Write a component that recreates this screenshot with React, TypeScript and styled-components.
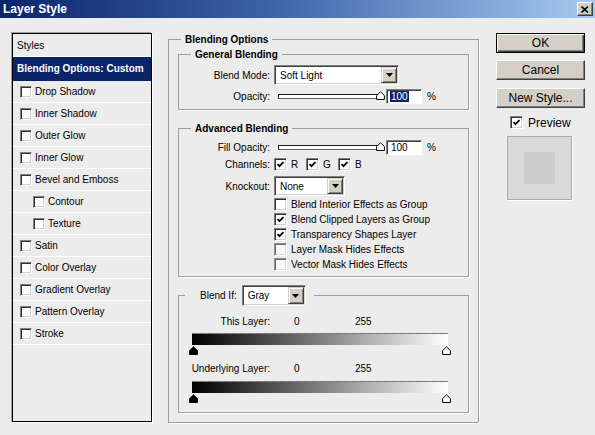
import React from 'react';
import styled, { createGlobalStyle } from 'styled-components';

const GlobalStyle = createGlobalStyle`
  html, body { margin: 0; padding: 0; background: #ececec; }
  body {
    font-family: "Liberation Sans", Arial, sans-serif;
    font-size: 10px;
    color: #000;
  }
  * { box-sizing: border-box; }
`;

const Window = styled.div`
  width: 595px;
  height: 435px;
  background: #ececec;
  display: flex;
  flex-direction: column;
  overflow: hidden;
`;

const TitleBar = styled.div`
  flex: none;
  height: 18px;
  display: flex;
  align-items: center;
  justify-content: space-between;
  padding: 0 2px 0 3px;
  background: linear-gradient(to right, #0a246a 0%, #3d62a8 45%, #a6caf0 100%);
`;

const Title = styled.span`
  color: #fff;
  font-weight: bold;
  font-size: 12px;
  line-height: 18px;
`;

const CloseButton = styled.span`
  width: 16px;
  height: 14px;
  display: flex;
  align-items: center;
  justify-content: center;
  background: #d4d0c8;
  border: 1px solid;
  border-color: #fff #404040 #404040 #fff;
  box-shadow: inset -1px -1px 0 #808080;
`;

const Body = styled.div`
  display: flex;
  align-items: flex-start;
  padding: 15px 0 0 12px;
`;

/* ---------- left style list ---------- */

const StyleList = styled.div`
  flex: none;
  width: 140px;
  height: 389px;
  display: flex;
  flex-direction: column;
  border: 1px solid #000;
  box-shadow: -1px -1px 0 #a0a0a0, 1px 1px 0 #fff;
  background: #ececec;
`;

const StyleRow = styled.div<{ $h: number; $indent: number; $selected?: boolean }>`
  flex: none;
  height: ${(p) => p.$h}px;
  display: flex;
  align-items: center;
  gap: 3px;
  padding-left: ${(p) => p.$indent}px;
  border-bottom: 1px solid ${(p) => (p.$selected ? '#0a246a' : '#fff')};
  background: ${(p) => (p.$selected ? '#0a246a' : 'transparent')};
  color: ${(p) => (p.$selected ? '#fff' : '#000')};
  font-weight: ${(p) => (p.$selected ? 'bold' : 'normal')};
  white-space: nowrap;
`;

/* ---------- classic checkbox ---------- */

const CheckBox = styled.span<{ $size: number; $dim?: boolean }>`
  flex: none;
  width: ${(p) => p.$size}px;
  height: ${(p) => p.$size}px;
  display: inline-flex;
  align-items: center;
  justify-content: center;
  background: ${(p) => (p.$dim ? '#f7f7f7' : '#fff')};
  border: 1px solid;
  border-color: ${(p) => (p.$dim ? '#8c8c8c #fff #fff #8c8c8c' : '#808080 #fff #fff #808080')};
  box-shadow: ${(p) =>
    p.$dim
      ? 'inset 1px 1px 0 #6a6a6a, inset -1px -1px 0 #dcdcdc'
      : 'inset 1px 1px 0 #303030, inset -1px -1px 0 #d4d0c8'};
`;

const Check = ({ checked, size = 13, dim }: { checked?: boolean; size?: number; dim?: boolean }) => (
  <CheckBox $size={size} $dim={dim}>
    {checked && (
      <svg width="7" height="7" viewBox="0 0 7 7">
        <polyline points="0.5,3 2.5,5.2 6.5,1" fill="none" stroke="#000" strokeWidth="1.8" />
      </svg>
    )}
  </CheckBox>
);

/* ---------- right options panel ---------- */

const Group = styled.fieldset<{ $w: number; $pt: number; $px: number; $pb: number; $mt?: number; $ml?: number }>`
  flex: none;
  width: ${(p) => p.$w}px;
  margin: ${(p) => p.$mt ?? 0}px 0 0 ${(p) => p.$ml ?? 0}px;
  min-width: 0;
  padding: ${(p) => p.$pt}px ${(p) => p.$px}px ${(p) => p.$pb}px;
  border: 1px solid #9d9d9d;
  box-shadow: 1px 1px 0 #fff;
`;

const Legend = styled.legend<{ $ml: number; $pl: number; $pr: number }>`
  margin-left: ${(p) => p.$ml}px;
  padding: 0 ${(p) => p.$pr}px 0 ${(p) => p.$pl}px;
  font-weight: bold;
  line-height: 13px;
  display: flex;
  align-items: center;
  gap: 5px;
`;

const LegendLabel = styled.span`
  font-weight: normal;
`;

const Row = styled.div<{ $h: number; $mt?: number }>`
  display: flex;
  align-items: center;
  height: ${(p) => p.$h}px;
  margin-top: ${(p) => p.$mt ?? 0}px;
  white-space: nowrap;
`;

const Label = styled.span`
  flex: none;
  width: 91px;
  text-align: right;
  margin-right: 4px;
`;

const Select = styled.div<{ $w: number; $h: number }>`
  flex: none;
  width: ${(p) => p.$w}px;
  height: ${(p) => p.$h}px;
  display: flex;
  align-items: center;
  justify-content: space-between;
  padding: 1px 1px 1px 4px;
  background: #fff;
  border: 1px solid;
  border-color: #808080 #fff #fff #808080;
  box-shadow: inset 1px 1px 0 #404040, inset -1px -1px 0 #d4d0c8;
  font-weight: normal;
`;

const SelectText = styled.span`
  padding-left: 1px;
`;

const ArrowButton = styled.span`
  flex: none;
  width: 16px;
  height: 100%;
  display: flex;
  align-items: center;
  justify-content: center;
  background: #d4d0c8;
  border: 1px solid;
  border-color: #d4d0c8 #404040 #404040 #d4d0c8;
  box-shadow: inset 1px 1px 0 #fff, inset -1px -1px 0 #808080;
`;

const Dropdown = ({ value, w, h = 20 }: { value: string; w: number; h?: number }) => (
  <Select $w={w} $h={h}>
    <SelectText>{value}</SelectText>
    <ArrowButton>
      <svg width="7" height="4" viewBox="0 0 7 4">
        <polygon points="0,0 7,0 3.5,4" fill="#000" />
      </svg>
    </ArrowButton>
  </Select>
);

const SliderWrap = styled.div`
  position: relative;
  flex: none;
  width: 107px;
  height: 12px;
  margin-left: 4px;
  display: flex;
  align-items: center;
`;

const Track = styled.div`
  width: 100px;
  height: 5px;
  background: #fff;
  border: 1px solid #1a1a1a;
  border-right-color: #808080;
  border-bottom-color: #606060;
`;

const ThumbSlot = styled.span`
  position: absolute;
  right: 0;
  top: 1px;
  display: flex;
`;

const Thumb = ({ dark }: { dark?: boolean }) => (
  <svg width="9" height="9" viewBox="0 0 9 9">
    <path
      d="M4.5 0.8 L8.4 4.6 V8.5 H0.6 V4.6 Z"
      fill={dark ? '#000' : '#fff'}
      stroke="#000"
      strokeWidth="1"
    />
  </svg>
);

const Slider = () => (
  <SliderWrap>
    <Track />
    <ThumbSlot>
      <Thumb />
    </ThumbSlot>
  </SliderWrap>
);

const NumberBox = styled.div`
  flex: none;
  width: 36px;
  height: 15px;
  margin-left: 1px;
  display: flex;
  align-items: center;
  padding-left: 3px;
  background: #fff;
  border: 1px solid;
  border-color: #808080 #fff #fff #808080;
  box-shadow: inset 1px 1px 0 #404040;
`;

const Highlight = styled.span<{ $on?: boolean }>`
  background: ${(p) => (p.$on ? '#0a246a' : 'transparent')};
  color: ${(p) => (p.$on ? '#fff' : '#000')};
  line-height: 11px;
  padding: 0 1px;
`;

const Percent = styled.span`
  margin-left: 5px;
`;

const ChannelItem = styled.span`
  display: flex;
  align-items: center;
  gap: 4px;
  width: 32px;
`;

const OptionList = styled.div`
  display: flex;
  flex-direction: column;
  margin: 1px 0 0 95px;
`;

const OptionRow = styled.div`
  height: 15px;
  display: flex;
  align-items: center;
  gap: 4px;
  white-space: nowrap;
`;

const ValueLabel = styled.span<{ $w: number }>`
  flex: none;
  width: ${(p) => p.$w}px;
`;

const GradientBar = styled.div<{ $mt: number }>`
  width: 256px;
  height: 12px;
  margin: ${(p) => p.$mt}px 0 0 13px;
  background: linear-gradient(to right, #000 0%, #fff 100%);
  box-shadow: inset 0 1px 0 #7a7a7a;
`;

const ThumbRow = styled.div`
  width: 262px;
  height: 8px;
  margin: 1px 0 0 10px;
  display: flex;
  justify-content: space-between;
  align-items: flex-start;
`;

/* ---------- right column ---------- */

const ButtonColumn = styled.div`
  flex: none;
  width: 89px;
  margin-left: 17px;
  display: flex;
  flex-direction: column;
`;

const Button = styled.div<{ $default?: boolean; $mt?: number }>`
  height: 20px;
  margin-top: ${(p) => p.$mt ?? 0}px;
  display: flex;
  align-items: center;
  justify-content: center;
  font-size: 12px;
  background: #d4d0c8;
  border: 1px solid;
  border-color: ${(p) => (p.$default ? '#000' : '#fff #404040 #404040 #fff')};
  box-shadow: ${(p) =>
    p.$default
      ? 'inset 1px 1px 0 #fff, inset -1px -1px 0 #404040, inset -2px -2px 0 #808080'
      : 'inset -1px -1px 0 #808080'};
`;

const PreviewRow = styled.div`
  margin-top: 8px;
  height: 13px;
  display: flex;
  align-items: center;
  gap: 5px;
  padding-left: 14px;
  font-size: 12px;
`;

const Swatch = styled.div`
  width: 65px;
  height: 64px;
  margin: 7px 0 0 11px;
  display: flex;
  align-items: center;
  justify-content: center;
  background: #d9d9d9;
  border: 1px solid #a9a9a9;
  box-shadow: 1px 1px 0 #fff;
`;

const SwatchInner = styled.div`
  width: 31px;
  height: 32px;
  background: #cdcdcd;
`;

const effects: { name: string; indent: number }[] = [
  { name: 'Drop Shadow', indent: 7 },
  { name: 'Inner Shadow', indent: 7 },
  { name: 'Outer Glow', indent: 7 },
  { name: 'Inner Glow', indent: 7 },
  { name: 'Bevel and Emboss', indent: 7 },
  { name: 'Contour', indent: 20 },
  { name: 'Texture', indent: 20 },
  { name: 'Satin', indent: 7 },
  { name: 'Color Overlay', indent: 7 },
  { name: 'Gradient Overlay', indent: 7 },
  { name: 'Pattern Overlay', indent: 7 },
  { name: 'Stroke', indent: 7 },
];

const advancedOptions: { label: string; checked: boolean; dim?: boolean }[] = [
  { label: 'Blend Interior Effects as Group', checked: false },
  { label: 'Blend Clipped Layers as Group', checked: true },
  { label: 'Transparency Shapes Layer', checked: true },
  { label: 'Layer Mask Hides Effects', checked: false, dim: true },
  { label: 'Vector Mask Hides Effects', checked: false, dim: true },
];

export default function App() {
  return (
    <>
      <GlobalStyle />
      <Window>
        <TitleBar>
          <Title>Layer Style</Title>
          <CloseButton>
            <svg width="8" height="7" viewBox="0 0 8 7">
              <path d="M0.5 0.5 L7 6.5 M7 0.5 L0.5 6.5" stroke="#000" strokeWidth="1.6" />
            </svg>
          </CloseButton>
        </TitleBar>

        <Body>
          <StyleList>
            <StyleRow $h={23} $indent={4}>Styles</StyleRow>
            <StyleRow $h={24} $indent={4} $selected>
              Blending Options: Custom
            </StyleRow>
            {effects.map((e) => (
              <StyleRow key={e.name} $h={22} $indent={e.indent}>
                <Check size={12} />
                {e.name}
              </StyleRow>
            ))}
          </StyleList>

          <Group $w={311} $pt={2} $px={9} $pb={9} $ml={16}>
            <Legend $ml={3} $pl={4} $pr={4}>Blending Options</Legend>

            <Group $w={291} $pt={4} $px={0} $pb={5}>
              <Legend $ml={12} $pl={4} $pr={4}>General Blending</Legend>
              <Row $h={20}>
                <Label>Blend Mode:</Label>
                <Dropdown value="Soft Light" w={125} />
              </Row>
              <Row $h={16} $mt={3}>
                <Label>Opacity:</Label>
                <Slider />
                <NumberBox>
                  <Highlight $on>100</Highlight>
                </NumberBox>
                <Percent>%</Percent>
              </Row>
            </Group>

            <Group $w={291} $pt={4} $px={0} $pb={4} $mt={12}>
              <Legend $ml={12} $pl={4} $pr={4}>Advanced Blending</Legend>
              <Row $h={16}>
                <Label>Fill Opacity:</Label>
                <Slider />
                <NumberBox>
                  <Highlight>100</Highlight>
                </NumberBox>
                <Percent>%</Percent>
              </Row>
              <Row $h={13} $mt={3}>
                <Label>Channels:</Label>
                <ChannelItem>
                  <Check checked />R
                </ChannelItem>
                <ChannelItem>
                  <Check checked />G
                </ChannelItem>
                <ChannelItem>
                  <Check checked />B
                </ChannelItem>
              </Row>
              <Row $h={20} $mt={5}>
                <Label>Knockout:</Label>
                <Dropdown value="None" w={71} />
              </Row>
              <OptionList>
                {advancedOptions.map((o) => (
                  <OptionRow key={o.label}>
                    <Check checked={o.checked} dim={o.dim} />
                    {o.label}
                  </OptionRow>
                ))}
              </OptionList>
            </Group>

            <Group $w={291} $pt={9} $px={0} $pb={10} $mt={8}>
              <Legend $ml={6} $pl={15} $pr={8}>
                <LegendLabel>Blend If:</LegendLabel>
                <Dropdown value="Gray" w={64} h={21} />
              </Legend>
              <Row $h={13}>
                <Label>This Layer:</Label>
                <ValueLabel $w={20} />
                <ValueLabel $w={61}>0</ValueLabel>
                <span>255</span>
              </Row>
              <GradientBar $mt={5} />
              <ThumbRow>
                <Thumb dark />
                <Thumb />
              </ThumbRow>
              <Row $h={13} $mt={8}>
                <Label>Underlying Layer:</Label>
                <ValueLabel $w={20} />
                <ValueLabel $w={61}>0</ValueLabel>
                <span>255</span>
              </Row>
              <GradientBar $mt={6} />
              <ThumbRow>
                <Thumb dark />
                <Thumb />
              </ThumbRow>
            </Group>
          </Group>

          <ButtonColumn>
            <Button $default>OK</Button>
            <Button $mt={7}>Cancel</Button>
            <Button $mt={8}>New Style...</Button>
            <PreviewRow>
              <Check checked />
              Preview
            </PreviewRow>
            <Swatch>
              <SwatchInner />
            </Swatch>
          </ButtonColumn>
        </Body>
      </Window>
    </>
  );
}
